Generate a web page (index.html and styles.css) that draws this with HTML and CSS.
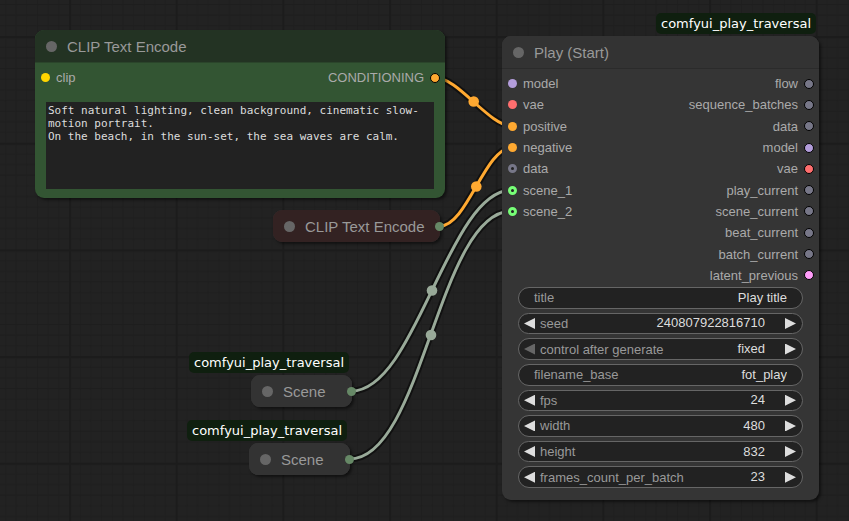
FILE: index.html
```html
<!DOCTYPE html>
<html lang="en">
<head>
<meta charset="utf-8">
<title>Node graph</title>
<link rel="stylesheet" href="styles.css">
</head>
<body>
<main class="canvas">
  <svg class="backdrop" aria-hidden="true">
    <defs>
      <pattern id="grid" width="100" height="100" patternUnits="userSpaceOnUse" patternTransform="translate(69 36) scale(1.0667)">
        <path class="minor" d="M10.5 0V100M20.5 0V100M30.5 0V100M40.5 0V100M50.5 0V100M60.5 0V100M70.5 0V100M80.5 0V100M90.5 0V100M0 10.5H100M0 20.5H100M0 30.5H100M0 40.5H100M0 50.5H100M0 60.5H100M0 70.5H100M0 80.5H100M0 90.5H100"/>
        <path class="major" d="M1 0V100M0 1H100"/>
      </pattern>
    </defs>
    <rect width="100%" height="100%" fill="url(#grid)"/>
    <g class="link-shadow">
      <path d="M435 77.500C458 77.500 489 126 512 126"/>
      <path d="M440 226C467 226 485 147.500 512 147.500"/>
      <path d="M351.500 391C416 391 448 190 512 190"/>
      <path d="M349.500 459C423 459 438 211 512 211"/>
    </g>
    <g class="link link-conditioning">
      <path d="M435 77.500C458 77.500 489 126 512 126"/>
      <path d="M440 226C467 226 485 147.500 512 147.500"/>
      <circle cx="473.700" cy="101.500" r="5.300"/>
      <circle cx="476.300" cy="186.500" r="5.300"/>
    </g>
    <g class="link link-scene">
      <path d="M351.500 391C416 391 448 190 512 190"/>
      <path d="M349.500 459C423 459 438 211 512 211"/>
      <circle cx="432" cy="290.500" r="5.300"/>
      <circle cx="431" cy="335" r="5.300"/>
    </g>
  </svg>

  <section class="node node-green">
    <h2 class="node-title">CLIP Text Encode</h2>
    <div class="slots">
      <ul class="inputs"><li class="slot yellow">clip</li></ul>
      <ul class="outputs"><li class="slot orange">CONDITIONING</li></ul>
    </div>
    <textarea class="prompt" aria-label="Prompt" spellcheck="false">Soft natural lighting, clean background, cinematic slow-motion portrait.
On the beach, in the sun-set, the sea waves are calm.</textarea>
  </section>

  <section class="node collapsed node-red">
    <h2 class="node-title">CLIP Text Encode</h2>
  </section>

  <section class="node collapsed scene-one">
    <span class="badge">comfyui_play_traversal</span>
    <h2 class="node-title">Scene</h2>
  </section>

  <section class="node collapsed scene-two">
    <span class="badge">comfyui_play_traversal</span>
    <h2 class="node-title">Scene</h2>
  </section>

  <section class="node node-play">
    <span class="badge">comfyui_play_traversal</span>
    <h2 class="node-title">Play (Start)</h2>
    <div class="slots slots-ten">
      <ul class="inputs">
        <li class="slot purple">model</li>
        <li class="slot red">vae</li>
        <li class="slot orange">positive</li>
        <li class="slot orange">negative</li>
        <li class="slot gray ring">data</li>
        <li class="slot green ring">scene_1</li>
        <li class="slot green ring">scene_2</li>
      </ul>
      <ul class="outputs">
        <li class="slot gray">flow</li>
        <li class="slot gray">sequence_batches</li>
        <li class="slot gray">data</li>
        <li class="slot purple">model</li>
        <li class="slot red">vae</li>
        <li class="slot gray">play_current</li>
        <li class="slot gray">scene_current</li>
        <li class="slot gray">beat_current</li>
        <li class="slot gray">batch_current</li>
        <li class="slot pink">latent_previous</li>
      </ul>
    </div>
    <div class="widgets">
      <div class="widget text"><label for="title">title</label><input id="title" value="Play title"></div>
      <div class="widget"><button class="prev" aria-label="Decrease seed"></button><label for="seed">seed</label><input id="seed" value="240807922816710"><button class="next" aria-label="Increase seed"></button></div>
      <div class="widget"><button class="prev" aria-label="Previous mode" disabled></button><label for="control">control after generate</label><select id="control"><option>fixed</option></select><button class="next" aria-label="Next mode"></button></div>
      <div class="widget text"><label for="filename">filename_base</label><input id="filename" value="fot_play"></div>
      <div class="widget"><button class="prev" aria-label="Decrease fps"></button><label for="fps">fps</label><input id="fps" value="24"><button class="next" aria-label="Increase fps"></button></div>
      <div class="widget"><button class="prev" aria-label="Decrease width"></button><label for="width">width</label><input id="width" value="480"><button class="next" aria-label="Increase width"></button></div>
      <div class="widget"><button class="prev" aria-label="Decrease height"></button><label for="height">height</label><input id="height" value="832"><button class="next" aria-label="Increase height"></button></div>
      <div class="widget"><button class="prev" aria-label="Decrease frames"></button><label for="frames">frames_count_per_batch</label><input id="frames" value="23"><button class="next" aria-label="Increase frames"></button></div>
    </div>
  </section>
</main>
</body>
</html>
```

FILE: styles.css
```css
*,
*::before,
*::after {
  box-sizing: border-box;
}

body {
  margin: 0;
  background: #222;
  color: #aaa;
  font: 13px/21px "Liberation Sans", Arial, sans-serif;
}

.canvas {
  position: relative;
  height: 100vh;
  overflow: hidden;
}

.backdrop {
  display: block;
  width: 100%;
  height: 100%;
}

.minor {
  stroke: #1e1e1e;
  stroke-width: 1;
}

.major {
  stroke: #1c1c1c;
  stroke-width: 2;
}

.link-shadow {
  fill: none;
  stroke: rgba(0, 0, 0, 0.5);
  stroke-width: 7;
}

.link {
  stroke-width: 3;
}

.link path {
  fill: none;
}

.link circle {
  stroke: none;
}

.link-conditioning {
  stroke: #ffa931;
  fill: #ffa931;
}

.link-scene {
  stroke: #9a9;
  fill: #9a9;
}

/* Nodes sit at free positions on the canvas */
.node {
  position: absolute;
  border-radius: 9px;
  background: #353535;
  box-shadow: 2px 2px 3px rgba(0, 0, 0, 0.5);
}

.node-green {
  left: 35px;
  top: 30px;
  width: 410px;
  padding-bottom: 9px;
  background: #353;
}

.node-red {
  left: 273px;
  top: 210px;
  width: 167px;
}

.scene-one {
  left: 251px;
  top: 375px;
  width: 101px;
}

.scene-two {
  left: 249px;
  top: 443px;
  width: 101px;
}

.node-play {
  left: 502px;
  top: 36px;
  width: 317px;
  padding-bottom: 12px;
}

.node-title {
  display: flex;
  align-items: center;
  gap: 10px;
  height: 33px;
  margin: 0;
  padding: 0 11px;
  border-bottom: 1px solid #2b2b2b;
  border-radius: 9px 9px 0 0;
  background: #333;
  color: #999;
  font-size: 15px;
  font-weight: 400;
}

.node-title::before {
  content: "";
  width: 11px;
  height: 11px;
  border-radius: 50%;
  background: #666;
}

.node-green .node-title {
  border-bottom-color: #2b452b;
  background: #233323;
}

.collapsed .node-title {
  height: 32px;
  border: 0;
  border-radius: 9px;
}

.node-red .node-title {
  background: #322;
}

.collapsed::after {
  content: "";
  position: absolute;
  top: 12px;
  right: -4px;
  width: 9px;
  height: 9px;
  border-radius: 50%;
  background: #686;
}

.badge {
  position: absolute;
  right: 3px;
  bottom: 100%;
  margin-bottom: 2px;
  padding: 0 5px;
  border-radius: 5px;
  background: #0f1f0f;
  color: #fff;
  font-family: "DejaVu Sans", sans-serif;
}

.slots {
  display: flex;
  justify-content: space-between;
  padding: 4px 5px 0 6px;
}

.slots ul {
  display: grid;
  margin: 0;
  padding: 0;
  list-style: none;
}

.slots-ten ul {
  grid-template-rows: repeat(10, 1fr);
  height: 213px;
}

.slot {
  display: flex;
  align-items: center;
  gap: 6px;
}

.slot::before {
  content: "";
  width: 9px;
  height: 9px;
  border-radius: 50%;
  background: var(--dot);
}

.outputs .slot {
  flex-direction: row-reverse;
}

.outputs .slot::before {
  width: 10px;
  height: 10px;
  border: 1px solid #000;
}

.slot.ring::before {
  border: 3px solid var(--dot);
  background: #222;
}

.yellow { --dot: #ffd500; }
.orange { --dot: #ffa931; }
.purple { --dot: #b39ddb; }
.red { --dot: #ff6e6e; }
.gray { --dot: #778; }
.green { --dot: #7f7; }
.pink { --dot: #ff9cf9; }

.prompt {
  display: block;
  width: calc(100% - 22px);
  height: 87px;
  margin: 14px 11px 0;
  padding: 2px;
  border: 0;
  resize: none;
  background: #222;
  color: #ddd;
  font: 11px/13px "DejaVu Sans Mono", monospace;
}

.widgets {
  display: flex;
  flex-direction: column;
  gap: 4px;
  height: 201px;
  margin: 1px 16px 0;
}

.widget {
  display: flex;
  flex: 1;
  align-items: center;
  min-height: 0;
  padding: 0 6px 0 5px;
  border: 1px solid #666;
  border-radius: 11px;
  background: #222;
  color: #999;
}

.widget.text {
  padding: 0 15px;
}

.widget input,
.widget select {
  flex: 1;
  min-width: 0;
  height: 18px;
  padding: 0;
  border: 0;
  appearance: none;
  background: none;
  color: #ddd;
  font: inherit;
  line-height: 18px;
  text-align: right;
  text-align-last: right;
}

.widget button {
  width: 11px;
  height: 11px;
  padding: 0;
  border: 0;
  background: #ddd;
}

.widget button:disabled {
  background: #666;
}

.widget .prev {
  margin-right: 5px;
  clip-path: polygon(100% 0, 0 50%, 100% 100%);
}

.widget .next {
  margin-left: 20px;
  clip-path: polygon(0 0, 100% 50%, 0 100%);
}
```
